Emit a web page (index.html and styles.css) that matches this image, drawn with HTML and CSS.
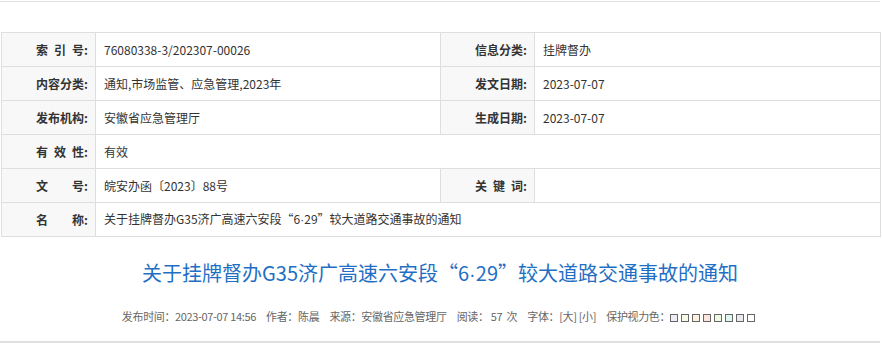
FILE: index.html
```html
<!DOCTYPE html>
<html lang="zh-CN">
<head>
<meta charset="utf-8">
<link rel="stylesheet" href="styles.css">
</head>
<body>
<div class="page">
  <div class="topline"></div>
  <table class="info">
    <tr>
      <th>索&ensp;引&ensp;号:</th><td>76080338-3/202307-00026</td>
      <th>信息分类:</th><td>挂牌督办</td>
    </tr>
    <tr>
      <th>内容分类:</th><td>通知,市场监管、应急管理,2023年</td>
      <th>发文日期:</th><td>2023-07-07</td>
    </tr>
    <tr>
      <th>发布机构:</th><td>安徽省应急管理厅</td>
      <th>生成日期:</th><td>2023-07-07</td>
    </tr>
    <tr>
      <th>有&ensp;效&ensp;性:</th><td colspan="3">有效</td>
    </tr>
    <tr>
      <th>文&emsp;&emsp;号:</th><td>皖安办函〔2023〕88号</td>
      <th>关&ensp;键&ensp;词:</th><td></td>
    </tr>
    <tr>
      <th>名&emsp;&emsp;称:</th><td colspan="3">关于挂牌督办G35济广高速六安段“6<span class="dot">·</span>29”较大道路交通事故的通知</td>
    </tr>
  </table>
  <h1 class="title">关于挂牌督办G35济广高速六安段“6<span class="dot">·</span>29”较大道路交通事故的通知</h1>
  <div class="meta">
    <span>发布时间：2023-07-07 14:56</span>
    <span>作者：陈晨</span>
    <span>来源：安徽省应急管理厅</span>
    <span>阅读：&nbsp;57&nbsp;&nbsp;次</span>
    <span>字体：[大] [小]</span>
    <span class="eye">保护视力色：<i class="sw c1"></i><i class="sw c2"></i><i class="sw c3"></i><i class="sw c4"></i><i class="sw c5"></i><i class="sw c6"></i><i class="sw c7"></i><i class="sw c8"></i></span>
  </div>
  <div class="bottomline"></div>
</div>
</body>
</html>
```
FILE: styles.css
```css
html, body {
  margin: 0;
  padding: 0;
  background: #fff;
}
body {
  font-family: "Noto Sans CJK SC", "Noto Sans", sans-serif;
  font-size: 12px;
  color: #333;
}
.page {
  width: 880px;
  padding-top: 1px;
}
.topline {
  height: 1px;
  background: #e2e2e2;
}
.dot {
  font-family: "Liberation Sans", sans-serif;
}
.info {
  margin: 30px 0 0 1px;
  width: 880px;
  border-collapse: collapse;
  table-layout: fixed;
}
.info th, .info td {
  border: 1px solid #dedede;
  height: 33px;
  padding: 0;
  line-height: 16px;
  font-size: 12px;
}
.info th {
  width: 86px;
  background: #f8f8f8;
  text-align: right;
  padding-right: 7px;
  font-weight: bold;
  color: #333;
}
.info td {
  padding-left: 8px;
  color: #333;
}
.info tr > td:nth-child(2) {
  width: 336px;
}
.title {
  margin: 22px 0 0;
  font-size: 20px;
  line-height: 28px;
  font-weight: normal;
  color: #1f6fc5;
  text-align: center;
}
.meta {
  margin-top: 20px;
  font-size: 11px;
  color: #666;
  text-align: center;
  line-height: 16px;
  letter-spacing: -0.35px;
}
.meta span {
  margin: 0 4px;
}
.sw {
  display: inline-block;
  width: 6px;
  height: 6px;
  border: 1px solid #666;
  margin-right: 3px;
  vertical-align: -1px;
}
.c1 { background: #eceef3; }
.c2 { background: #f6f9e6; }
.c3 { background: #fdf0e0; }
.c4 { background: #fde5df; }
.c5 { background: #eefbe0; }
.c6 { background: #dcf8ef; }
.c7 { background: #e9e9ef; }
.c8 { background: #ffffff; }
.bottomline {
  margin-top: 17px;
  height: 2px;
  background: #e0e0e0;
}
```
